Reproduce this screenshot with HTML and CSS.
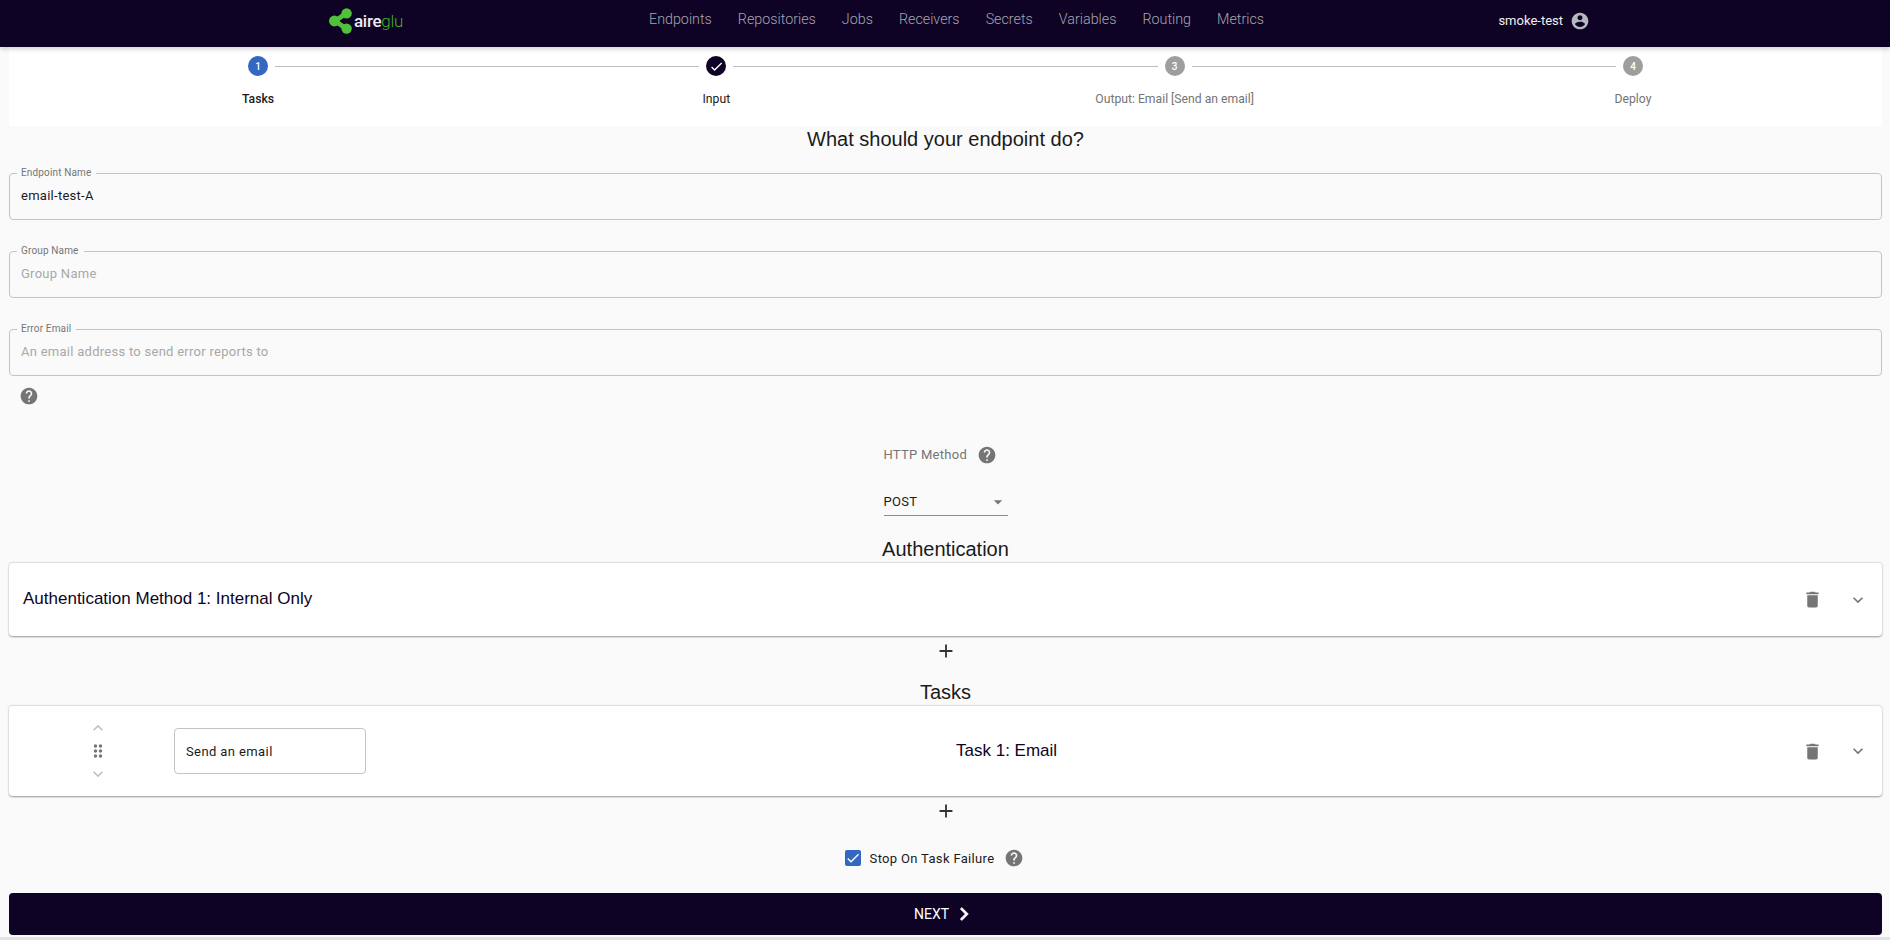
FILE: index.html
```html
<!DOCTYPE html>
<html lang="en" dir="ltr">

<head>
    <meta charset="utf-8">
    <title>Create endpoint</title>
    <link rel="stylesheet" href="styles.css">
</head>

<body>
    <nav class="topBar">
        <a class="logo">
            <svg class="logoMark" viewBox="0 0 24 26" width="24" height="26">
                <path d="M17 5.5L6 13L17 20.5" fill="none" stroke="#50c13a" stroke-width="4.6" />
                <circle cx="17.6" cy="5.4" r="5.2" fill="#50c13a" />
                <circle cx="5.4" cy="13" r="5.4" fill="#50c13a" />
                <circle cx="17.6" cy="20.6" r="5.2" fill="#50c13a" />
            </svg>
            <span class="logoAire">aire</span><span class="logoGlu">glu</span>
        </a>
        <div class="navLinks">
            <a>Endpoints</a>
            <a>Repositories</a>
            <a>Jobs</a>
            <a>Receivers</a>
            <a>Secrets</a>
            <a>Variables</a>
            <a>Routing</a>
            <a>Metrics</a>
        </div>
        <div class="userBox">
            <span>smoke-test</span>
            <svg class="userIcon" viewBox="0 0 24 24" width="20" height="20">
                <path d="M12 2C6.48 2 2 6.48 2 12s4.48 10 10 10 10-4.48 10-10S17.52 2 12 2zm0 3c1.66 0 3 1.34 3 3s-1.34 3-3 3-3-1.34-3-3 1.34-3 3-3zm0 14.2c-2.5 0-4.71-1.28-6-3.22.03-1.99 4-3.08 6-3.08 1.99 0 5.97 1.09 6 3.08-1.29 1.94-3.5 3.22-6 3.22z" />
            </svg>
        </div>
    </nav>

    <main class="page">
        <section class="stepper">
            <div class="step">
                <div class="stepHead">
                    <span class="stepDot dotActive">1</span>
                    <span class="stepLabel labelActive">Tasks</span>
                </div>
                <span class="stepLine"></span>
            </div>
            <div class="step">
                <div class="stepHead">
                    <span class="stepDot dotDone">
                        <svg viewBox="0 0 24 24" width="15" height="15">
                            <path d="M9 16.17L4.83 12l-1.42 1.41L9 19 21 7l-1.41-1.41z" />
                        </svg>
                    </span>
                    <span class="stepLabel labelDone">Input</span>
                </div>
                <span class="stepLine"></span>
            </div>
            <div class="step">
                <div class="stepHead">
                    <span class="stepDot">3</span>
                    <span class="stepLabel">Output: Email [Send an email]</span>
                </div>
                <span class="stepLine"></span>
            </div>
            <div class="step stepLast">
                <div class="stepHead">
                    <span class="stepDot">4</span>
                    <span class="stepLabel">Deploy</span>
                </div>
            </div>
        </section>

        <h2 class="formTitle">What should your endpoint do?</h2>

        <fieldset class="field">
            <legend>Endpoint Name</legend>
            <input type="text" value="email-test-A">
        </fieldset>
        <fieldset class="field">
            <legend>Group Name</legend>
            <input type="text" placeholder="Group Name">
        </fieldset>
        <fieldset class="field">
            <legend>Error Email</legend>
            <input type="text" placeholder="An email address to send error reports to">
        </fieldset>

        <div class="emailHelp">
            <svg class="helpIcon" viewBox="0 0 24 24" width="20" height="20">
                <path d="M12 2C6.48 2 2 6.48 2 12s4.48 10 10 10 10-4.48 10-10S17.52 2 12 2zm1 17h-2v-2h2v2zm2.07-7.75l-.9.92C13.45 12.9 13 13.5 13 15h-2v-.5c0-1.1.45-2.1 1.17-2.83l1.24-1.26c.37-.36.59-.86.59-1.41 0-1.1-.9-2-2-2s-2 .9-2 2H8c0-2.21 1.79-4 4-4s4 1.79 4 4c0 .88-.36 1.68-.93 2.25z" />
            </svg>
        </div>

        <div class="methodBox">
            <div class="methodLabel">
                <span>HTTP Method</span>
                <svg class="helpIcon" viewBox="0 0 24 24" width="20" height="20">
                    <path d="M12 2C6.48 2 2 6.48 2 12s4.48 10 10 10 10-4.48 10-10S17.52 2 12 2zm1 17h-2v-2h2v2zm2.07-7.75l-.9.92C13.45 12.9 13 13.5 13 15h-2v-.5c0-1.1.45-2.1 1.17-2.83l1.24-1.26c.37-.36.59-.86.59-1.41 0-1.1-.9-2-2-2s-2 .9-2 2H8c0-2.21 1.79-4 4-4s4 1.79 4 4c0 .88-.36 1.68-.93 2.25z" />
                </svg>
            </div>
            <div class="methodSelect">
                <span>POST</span>
                <svg viewBox="0 0 24 24" width="20" height="20">
                    <path d="M7 10l5 5 5-5z" />
                </svg>
            </div>
        </div>

        <h2 class="sectionTitle">Authentication</h2>
        <div class="card authCard">
            <span class="authName">Authentication Method 1: Internal Only</span>
            <div class="cardActions">
                <svg viewBox="0 0 24 24" width="21" height="21">
                    <path d="M6 19c0 1.1.9 2 2 2h8c1.1 0 2-.9 2-2V7H6v12zM19 4h-3.5l-1-1h-5l-1 1H5v2h14V4z" />
                </svg>
                <svg viewBox="0 0 24 24" width="20" height="20">
                    <path d="M16.59 8.59L12 13.17 7.41 8.59 6 10l6 6 6-6z" />
                </svg>
            </div>
        </div>
        <div class="addRow">
            <svg viewBox="0 0 24 24" width="22" height="22">
                <path d="M19 13h-6v6h-2v-6H5v-2h6V5h2v6h6v2z" />
            </svg>
        </div>

        <h2 class="sectionTitle tasksTitle">Tasks</h2>
        <div class="card taskCard">
            <div class="moveBox">
                <svg class="moveArrow" viewBox="0 0 24 24" width="20" height="20">
                    <path d="M7.41 15.41L12 10.83l4.59 4.58L18 14l-6-6-6 6z" />
                </svg>
                <svg class="dragIcon" viewBox="0 0 24 24" width="20" height="20">
                    <path d="M11 18c0 1.1-.9 2-2 2s-2-.9-2-2 .9-2 2-2 2 .9 2 2zm-2-8c-1.1 0-2 .9-2 2s.9 2 2 2 2-.9 2-2-.9-2-2-2zm0-6c-1.1 0-2 .9-2 2s.9 2 2 2 2-.9 2-2-.9-2-2-2zm6 4c1.1 0 2-.9 2-2s-.9-2-2-2-2 .9-2 2 .9 2 2 2zm0 2c-1.1 0-2 .9-2 2s.9 2 2 2 2-.9 2-2-.9-2-2-2zm0 6c-1.1 0-2 .9-2 2s.9 2 2 2 2-.9 2-2-.9-2-2-2z" />
                </svg>
                <svg class="moveArrow" viewBox="0 0 24 24" width="20" height="20">
                    <path d="M16.59 8.59L12 13.17 7.41 8.59 6 10l6 6 6-6z" />
                </svg>
            </div>
            <input class="taskName" type="text" value="Send an email">
            <span class="taskTitle">Task 1: Email</span>
            <div class="cardActions">
                <svg viewBox="0 0 24 24" width="21" height="21">
                    <path d="M6 19c0 1.1.9 2 2 2h8c1.1 0 2-.9 2-2V7H6v12zM19 4h-3.5l-1-1h-5l-1 1H5v2h14V4z" />
                </svg>
                <svg viewBox="0 0 24 24" width="20" height="20">
                    <path d="M16.59 8.59L12 13.17 7.41 8.59 6 10l6 6 6-6z" />
                </svg>
            </div>
        </div>
        <div class="addRow">
            <svg viewBox="0 0 24 24" width="22" height="22">
                <path d="M19 13h-6v6h-2v-6H5v-2h6V5h2v6h6v2z" />
            </svg>
        </div>

        <div class="stopRow">
            <span class="checkBox">
                <svg viewBox="0 0 24 24" width="16" height="16">
                    <path d="M9 16.17L4.83 12l-1.42 1.41L9 19 21 7l-1.41-1.41z" />
                </svg>
            </span>
            <span class="stopLabel">Stop On Task Failure</span>
            <svg class="helpIcon" viewBox="0 0 24 24" width="20" height="20">
                <path d="M12 2C6.48 2 2 6.48 2 12s4.48 10 10 10 10-4.48 10-10S17.52 2 12 2zm1 17h-2v-2h2v2zm2.07-7.75l-.9.92C13.45 12.9 13 13.5 13 15h-2v-.5c0-1.1.45-2.1 1.17-2.83l1.24-1.26c.37-.36.59-.86.59-1.41 0-1.1-.9-2-2-2s-2 .9-2 2H8c0-2.21 1.79-4 4-4s4 1.79 4 4c0 .88-.36 1.68-.93 2.25z" />
            </svg>
        </div>

        <button class="btnNext" type="button">
            <span>NEXT</span>
            <svg viewBox="0 0 24 24" width="26" height="26">
                <path d="M10 6L8.59 7.41 13.17 12l-4.58 4.59L10 18l6-6z" stroke="#fff" stroke-width="0.6" />
            </svg>
        </button>
    </main>
    <div class="bottomBand"></div>
</body>

</html>
```

FILE: styles.css
```css
* {
    box-sizing: border-box;
}

html,
body {
    height: 100%;
}

body {
    margin: 0;
    height: 940px;
    overflow: hidden;
    background: #fafafa;
    color: #1a1a1a;
    font-family: Roboto, sans-serif;
}

.topBar {
    position: relative;
    z-index: 2;
    display: flex;
    align-items: flex-start;
    height: 47px;
    padding: 0 300px 0 329px;
    background: #0e0324;
    box-shadow: 0 2px 5px rgba(0, 0, 0, 0.18);
}

.logo {
    display: flex;
    align-items: center;
    width: 320px;
    height: 42px;
    font-size: 17px;
    letter-spacing: -0.3px;
    line-height: 42px;
}

.logoMark {
    flex: none;
}

.logoAire {
    margin-left: 1px;
    color: #ece9f5;
    font-weight: 500;
}

.logoGlu {
    color: #45ad2f;
    font-weight: 300;
}

.navLinks {
    display: flex;
    gap: 26px;
    font-size: 14.3px;
    font-weight: 300;
    line-height: 38px;
    color: #a5a5b2;
}

.userBox {
    display: flex;
    align-items: center;
    gap: 7px;
    height: 41px;
    margin-left: auto;
    font-size: 13px;
    color: #f2f2f2;
}

.userIcon {
    fill: #b4b8bf;
}

.page {
    padding: 0 8px 0 9px;
}

.stepper {
    display: flex;
    height: 79px;
    padding: 9px 239px 0 239px;
    background: #fff;
}

.step {
    display: flex;
    flex: 1;
    align-items: flex-start;
}

.stepLast {
    flex: none;
}

.stepHead {
    display: flex;
    flex-direction: column;
    align-items: center;
    width: 20px;
}

.stepDot {
    display: flex;
    align-items: center;
    justify-content: center;
    flex: none;
    width: 20px;
    height: 20px;
    border-radius: 50%;
    background: #9e9e9e;
    color: #fff;
    font-size: 10px;
    font-weight: 500;
}

.dotActive {
    background: #3367c2;
}

.dotDone {
    background: #0e0324;
}

.dotDone svg {
    fill: #fff;
}

.stepLabel {
    margin-top: 16px;
    font-size: 12.2px;
    line-height: 14px;
    white-space: nowrap;
    color: #757575;
}

.labelActive {
    font-weight: 500;
    color: #1a1a1a;
}

.labelDone {
    color: #1a1a1a;
}

.stepLine {
    flex: 1;
    margin: 10px 7px 0;
    border-top: 1px solid #bdbdbd;
}

.formTitle,
.sectionTitle {
    margin: 0;
    font-family: "Liberation Sans", Arial, sans-serif;
    font-size: 20px;
    font-weight: 400;
    line-height: 24px;
    text-align: center;
}

.formTitle {
    padding-top: 1px;
    margin-bottom: 16px;
}

.field {
    display: block;
    min-width: 0;
    height: 53px;
    margin: 0 0 25px;
    padding: 0 7px;
    border: 1px solid #c4c4c4;
    border-radius: 4px;
}

.field legend {
    padding: 0 5px 0 4px;
    font-size: 10px;
    line-height: 12px;
    letter-spacing: 0.15px;
    color: #757575;
}

.field input {
    display: block;
    width: 100%;
    height: 33px;
    padding: 0 0 0 4px;
    border: 0;
    outline: 0;
    background: transparent;
    font-family: Roboto, sans-serif;
    font-size: 13px;
    letter-spacing: 0.27px;
    color: #1a1a1a;
}

.field input::placeholder {
    color: #a8a8a8;
    opacity: 1;
}

.emailHelp {
    height: 20px;
    margin: -15px 0 0 10px;
}

.helpIcon {
    flex: none;
    fill: #757575;
}

.methodBox {
    width: 124px;
    margin: 39px auto 0;
}

.methodLabel {
    display: flex;
    align-items: center;
    gap: 10px;
    height: 20px;
    font-size: 13px;
    letter-spacing: 0.27px;
    color: #757575;
}

.methodLabel span {
    margin-top: -2px;
    white-space: nowrap;
}

.methodSelect {
    display: flex;
    align-items: center;
    justify-content: space-between;
    height: 24px;
    margin-top: 27px;
    padding: 0 0 4px;
    border-bottom: 1px solid #8c8c8c;
    font-size: 13px;
    letter-spacing: 0.27px;
}

.methodSelect svg {
    fill: #757575;
}

.sectionTitle {
    margin-top: 21px;
    height: 25px;
}

.card {
    display: flex;
    align-items: center;
    background: #fff;
    border-radius: 4px;
    border-top: 1px solid #e0e0e0;
    box-shadow: 0 1px 2px rgba(0, 0, 0, 0.4);
}

.authCard {
    height: 74px;
    padding: 0 0 0 14px;
}

.authName {
    margin-top: -2px;
    font-family: "Liberation Sans", Arial, sans-serif;
    font-size: 17px;
    color: #0e0324;
}

.cardActions {
    display: flex;
    align-items: center;
    gap: 25px;
    margin-left: auto;
    padding-right: 14px;
}

.cardActions svg {
    fill: #757575;
}

.addRow {
    display: flex;
    justify-content: center;
    height: 30px;
    padding-top: 4px;
}

.addRow svg {
    fill: #333;
}

.tasksTitle {
    margin-top: 14px;
    height: 25px;
}

.taskCard {
    height: 91px;
}

.moveBox {
    display: flex;
    flex-direction: column;
    align-items: center;
    width: 178px;
}

.moveBox svg {
    margin: 1.5px 0;
}

.moveArrow {
    fill: #c0c0c0;
}

.dragIcon {
    fill: #757575;
}

.taskName {
    width: 192px;
    height: 46px;
    margin-left: -13px;
    padding: 0 11px;
    border: 1px solid #c4c4c4;
    border-radius: 4px;
    outline: 0;
    font-family: Roboto, sans-serif;
    font-size: 13px;
    letter-spacing: 0.4px;
    color: #1a1a1a;
}

.taskTitle {
    margin-left: 590px;
    font-family: "Liberation Sans", Arial, sans-serif;
    font-size: 17px;
    color: #0e0324;
}

.stopRow {
    display: flex;
    align-items: center;
    justify-content: center;
    height: 20px;
    margin-top: 22px;
    padding-right: 22px;
    gap: 9px;
    font-size: 13px;
    letter-spacing: 0.33px;
}

.checkBox {
    display: flex;
    width: 16px;
    height: 16px;
    border-radius: 2px;
    background: #3367c2;
}

.checkBox svg {
    fill: #fff;
}

.stopLabel {
    margin-right: 1px;
}

.btnNext {
    display: flex;
    align-items: center;
    justify-content: center;
    gap: 2px;
    width: 100%;
    height: 42px;
    margin-top: 25px;
    border: 0;
    border-radius: 4px;
    background: #0e0324;
    color: #fff;
    font-family: Roboto, sans-serif;
    font-size: 14px;
}

.btnNext svg {
    fill: #fff;
}

.bottomBand {
    height: 3px;
    margin-top: 2px;
    background: #e3e3e3;
}
```
